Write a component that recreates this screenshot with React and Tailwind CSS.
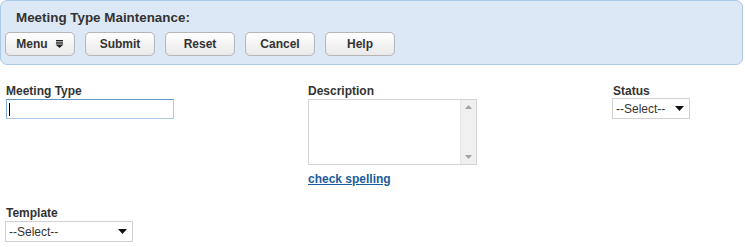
const buttons = ['Submit', 'Reset', 'Cancel', 'Help'];

const MenuIcon = () => (
  <svg width="9" height="8" viewBox="0 0 9 8" className="ml-[7px]">
    <rect x="1" y="0" width="7" height="1.4" fill="#222" />
    <rect x="1" y="2.3" width="7" height="1.4" fill="#222" />
    <path d="M0.5 4.6 H8.5 L4.5 8 Z" fill="#222" />
  </svg>
);

const Caret = () => (
  <svg width="9" height="5" viewBox="0 0 9 5">
    <path d="M0 0 H9 L4.5 5 Z" fill="#111" />
  </svg>
);

const HeaderButton = ({ children }) => (
  <button className="flex h-6 w-[70px] items-center justify-center rounded-[5px] border border-[#b5b5b5] bg-gradient-to-b from-[#ffffff] to-[#e9e9e9] text-[12px] font-bold text-[#333]">
    {children}
  </button>
);

const Select = ({ width }) => (
  <div
    className={`flex h-[21px] items-center justify-between border border-[#d2d2d2] bg-white pl-[3px] pr-[5px] text-[12px] text-[#333] ${width}`}
  >
    <span>--Select--</span>
    <Caret />
  </div>
);

const Label = ({ children }) => (
  <div className="mb-px h-[14px] text-[12px] font-bold leading-[14px] text-[#333]">{children}</div>
);

export default function App() {
  return (
    <div className="h-[247px] w-[745px] bg-white font-['Liberation_Sans',Arial,sans-serif]">
      {/* Toolbar */}
      <div className="h-[65px] w-[743px] rounded-[7px] border border-[#a9c9e9] bg-[#dce8f5]">
        <div className="pl-[15px] pt-[9px] text-[13.4px] font-bold leading-[15px] text-[#333]">
          Meeting Type Maintenance:
        </div>
        <div className="mt-[7px] flex gap-[10px] pl-1">
          <HeaderButton>
            Menu
            <MenuIcon />
          </HeaderButton>
          {buttons.map((b) => (
            <HeaderButton key={b}>{b}</HeaderButton>
          ))}
        </div>
      </div>

      {/* Form */}
      <div className="mt-[19px] grid grid-cols-[307px_305px_1fr]">
        <div className="pl-[6px]">
          <Label>Meeting Type</Label>
          <div className="flex h-5 w-[168px] items-center border border-[#a9cbe8] border-t-[#6696c4] border-l-[#82aad2] bg-white pl-[2px]">
            <span className="h-[13px] w-px bg-black" />
          </div>
        </div>

        <div className="pl-[1px]">
          <Label>Description</Label>
          <div className="flex h-[66px] w-[169px] border border-[#d4d4d4] bg-white">
            <div className="flex-1" />
            <div className="flex w-4 flex-col items-center justify-between border-l border-[#e6e6e6] bg-[#f0f0f0] py-[5px]">
              <svg width="7" height="4" viewBox="0 0 7 4">
                <path d="M0 4 H7 L3.5 0 Z" fill="#a3a3a3" />
              </svg>
              <svg width="7" height="4" viewBox="0 0 7 4">
                <path d="M0 0 H7 L3.5 4 Z" fill="#a3a3a3" />
              </svg>
            </div>
          </div>
          <a className="mt-[7px] block text-[12px] font-bold leading-[14px] text-[#1b5c9e] underline">
            check spelling
          </a>
        </div>

        <div>
          <div className="pl-px">
            <Label>Status</Label>
          </div>
          <div className="-mt-px">
            <Select width="w-[78px]" />
          </div>
        </div>
      </div>

      <div className="mt-[20px] pl-[5px]">
        <div className="pl-px">
          <Label>Template</Label>
        </div>
        <Select width="w-[128px]" />
      </div>
    </div>
  );
}
